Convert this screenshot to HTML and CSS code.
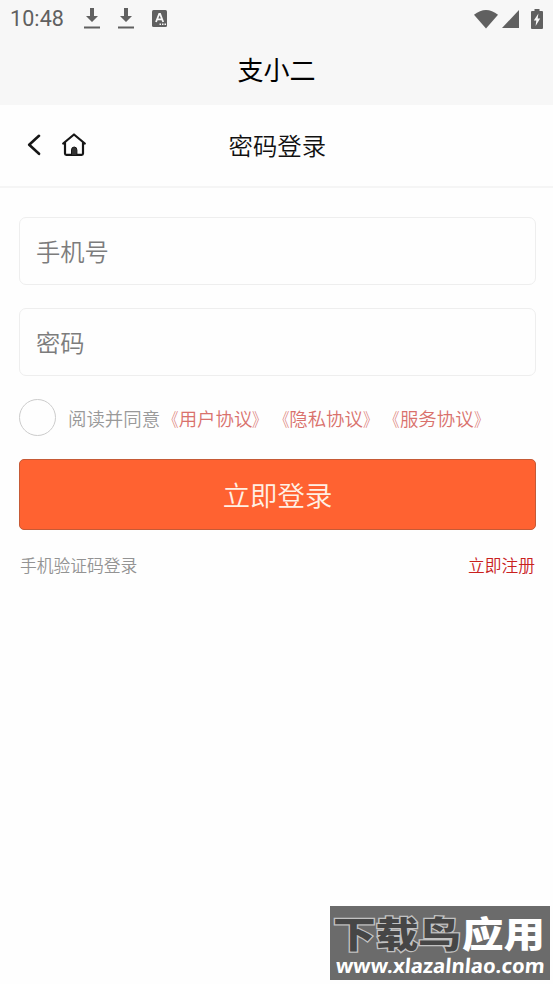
FILE: index.html
```html
<!DOCTYPE html>
<html lang="zh-CN">
<head>
<meta charset="utf-8">
<title>支小二</title>
<link rel="stylesheet" href="styles.css">
</head>
<body>
<header class="top">
  <div class="status">
    <span class="time">10:48</span>
    <svg class="download" width="16" height="21" viewBox="0 0 16 21"><path d="M6 0h4v8h4l-6 6-6-6h4zM0 18.5h16v2H0z"/></svg>
    <svg class="download second" width="16" height="21" viewBox="0 0 16 21"><path d="M6 0h4v8h4l-6 6-6-6h4zM0 18.5h16v2H0z"/></svg>
    <svg class="letter" width="15" height="17" viewBox="0 0 15 17"><rect width="15" height="17" rx="1.5"/><path d="M4 12 7.2 4h.9l3.1 8M5.4 9.3h4.4" fill="none" stroke="#f7f7f7" stroke-width="1.8"/><path d="M7.5 13.5H9V15H7.5zm2.5 0h1.5V15H10zm2.5 0H14V15h-1.5z" fill="#f7f7f7"/></svg>
    <span class="spacer"></span>
    <svg width="24" height="19" viewBox="0 0 24 19"><path d="M0 4.8Q12-4.6 24 4.8L12 18.5z"/></svg>
    <svg class="signal" width="17" height="18" viewBox="0 0 17 18"><path d="M17 0v18H0z"/></svg>
    <svg class="battery" width="12" height="20" viewBox="0 0 12 20"><path d="M3.5 0h5v2H11q1 0 1 1v16q0 1-1 1H1q-1 0-1-1V3q0-1 1-1h2.5z"/><path d="M7.4 4.5 2.8 11.5h2.5l-.7 5.5L9.2 9.5H6.7z" fill="#f7f7f7"/></svg>
  </div>
  <h1 class="app-title">支小二</h1>
</header>
<nav class="nav">
  <svg class="back" width="16" height="22" viewBox="0 0 16 22"><path d="m12 1.8-9.8 9 9.8 9"/></svg>
  <svg class="home" width="26" height="24" viewBox="0 0 26 24"><path d="M1.2 10.5 12 1.5l10.8 9M3 9.5v11q0 1.3 1.3 1.3h15.4q1.3 0 1.3-1.3v-11"/><path class="door" d="M9.5 22v-5q0-3 2.7-3t2.7 3v5z"/></svg>
  <h2 class="page-title">密码登录</h2>
</nav>
<main class="form">
  <input class="field" type="text" placeholder="手机号">
  <input class="field" type="password" placeholder="密码">
  <div class="terms">
    <span class="check"></span>
    <span>阅读并同意<span class="links"><i class="open">《</i>用户协议<i class="close">》</i><i class="open">《</i>隐私协议<i class="close">》</i><i class="open">《</i>服务协议<i class="close">》</i></span></span>
  </div>
  <button class="submit">立即登录</button>
  <div class="options"><span>手机验证码登录</span><span class="register">立即注册</span></div>
</main>
<div class="watermark">
  <svg width="220" height="74" viewBox="0 0 220 74">
    <text class="brand dark" x="3" y="42" textLength="128" lengthAdjust="spacingAndGlyphs">下载鸟</text>
    <text class="brand light" x="132" y="42" textLength="83" lengthAdjust="spacingAndGlyphs">应用</text>
    <text class="site" transform="skewX(-5)" x="11" y="67" textLength="209" lengthAdjust="spacingAndGlyphs">www.xlazalnlao.com</text>
  </svg>
</div>
</body>
</html>
```
FILE: styles.css
```css
* { box-sizing: border-box; }
body {
  margin: 0;
  min-height: 984px;
  background: #fefefe;
  color: #111;
  font-family: "Noto Sans CJK SC", sans-serif;
  font-weight: 350;
  text-spacing-trim: space-all;
}
svg { display: block; flex: none; }
h1, h2 { margin: 0; font-weight: 350; }
.top { height: 105px; background: #f7f7f7; }
.status {
  display: flex;
  align-items: center;
  height: 38px;
  padding: 0 10px;
  color: #606060;
  fill: #606060;
}
.download { margin-top: -1px; }
.time {
  width: 74px;
  font: 21.5px/40px Roboto, sans-serif;
  letter-spacing: .1px;
}
.second { margin-left: 18px; }
.letter { margin-left: 18px; margin-top: -1px; }
.spacer { flex: 1; }
.signal { margin-left: 4px; }
.battery { margin-left: 12px; margin-top: -1px; }
.app-title {
  color: #000;
  font-size: 26px;
  font-weight: 400;
  line-height: 62px;
  text-align: center;
}
.nav {
  display: grid;
  grid-template-columns: 35px 166.5px auto;
  align-items: center;
  height: 83px;
  padding: 0 0 2px 27px;
  border-bottom: 2px solid #f5f5f5;
}
.back, .home { fill: none; stroke: #161616; stroke-width: 2.6; stroke-linecap: round; stroke-linejoin: round; }
.home { stroke-width: 2.2; }
.home .door { fill: #333; stroke-width: 1; }
.page-title { font-size: 24.4px; line-height: 78px; }
.form { padding: 29px 17px 0 19px; }
.field {
  display: block;
  width: 100%;
  height: 68px;
  margin-bottom: 23px;
  padding: 0 16px 2px;
  border: 1.5px solid #eee;
  border-radius: 7px;
  background: #fefefe;
  font: 350 24.3px "Noto Sans CJK SC", sans-serif;
}
.field::placeholder { color: #7c7c7c; opacity: 1; }
.terms {
  display: flex;
  align-items: center;
  gap: 12px;
  height: 37px;
  color: #999;
  font-size: 18.45px;
  white-space: nowrap;
}
.check { width: 37px; height: 37px; border: 1.5px solid #ccc; border-radius: 50%; }
.links { color: #d9716c; }
.links i { display: inline-block; font-style: normal; font-weight: 300; }
.open { transform: scaleX(.8); transform-origin: right; }
.close { transform: scaleX(.8); transform-origin: left; }
.submit {
  display: block;
  width: 100%;
  height: 71px;
  margin-top: 23px;
  padding: 0 0 2px;
  border: 1px solid #c65a36;
  border-radius: 5px;
  background: #ff6231;
  color: #fff0e4;
  font: 350 27.4px "Noto Sans CJK SC", sans-serif;
}
.options {
  display: flex;
  justify-content: space-between;
  margin-top: 22px;
  padding: 0 1px;
  color: #939393;
  font-size: 16.75px;
  line-height: 26px;
}
.register { color: #c9211e; }
.watermark {
  position: absolute;
  left: 330px;
  top: 906px;
  width: 220px;
  height: 74px;
  background: #6b6b6b;
}
.brand { font: 900 36px "Noto Sans CJK SC", sans-serif; }
.dark { fill: #464646; stroke: #c2c2c2; stroke-width: 2.4px; paint-order: stroke; }
.light { fill: #fff; }
.site { fill: #fff; font: 700 20px "Noto Sans", sans-serif; }
```
